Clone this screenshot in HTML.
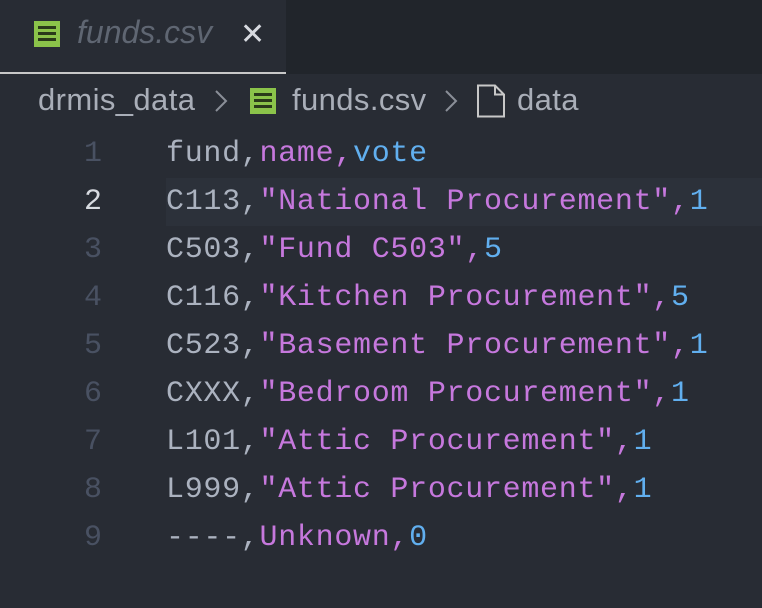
<!DOCTYPE html>
<html><head><meta charset="utf-8"><style>
*{margin:0;padding:0;box-sizing:border-box}
body{width:762px;height:608px;background:#282c34;overflow:hidden;position:relative;font-family:"Liberation Sans",sans-serif}
.tabbar{position:absolute;left:0;top:0;width:762px;height:74px;background:#21252b}
.tab{position:absolute;left:0;top:0;width:286px;height:74px;background:#282c34;border-bottom:2px solid #c8c8c8}
.tab .name{position:absolute;left:77px;top:14px;font-size:32px;font-style:italic;color:#5f6672}
.tab .x{position:absolute;left:240px;top:17px;font-size:30px;color:#d7dae0}
.ico{position:absolute;width:26px;height:26px;background:#8bc34a}
.ico i{position:absolute;left:4px;width:18px;height:3px;background:#2a3a1a}
.bc{position:absolute;top:82px;font-size:31px;color:#a9aeb8;letter-spacing:0.4px}
.code{position:absolute;top:130px;left:0;width:762px;font-family:"Liberation Mono",monospace;font-size:30px}
.ln{height:48px;line-height:48px;position:relative}
.ln .n{position:absolute;right:660px;color:#495162;width:60px;text-align:right}
.ln .t{position:absolute;left:166px;color:#abb2bf;white-space:pre;letter-spacing:0.7px}
.hl{position:absolute;left:166px;right:0;top:0;bottom:0;background:#2c313a}
.s{color:#c678dd}.b{color:#61afef}
</style></head><body>
<div class="tabbar"></div>
<div class="tab">
 <div class="ico" style="left:34px;top:21px"><i style="top:5px"></i><i style="top:11px"></i><i style="top:17px"></i></div>
 <div class="name">funds.csv</div>
 <div class="x">✕</div>
</div>
<div class="bc" style="left:38px">drmis_data</div>
<svg style="position:absolute;left:212px;top:88px" width="18" height="26" viewBox="0 0 18 26"><path d="M4 3L14 13L4 23" fill="none" stroke="#8a8f98" stroke-width="2"/></svg>
<div class="ico" style="left:250px;top:88px"><i style="top:5px"></i><i style="top:11px"></i><i style="top:17px"></i></div>
<div class="bc" style="left:292px">funds.csv</div>
<svg style="position:absolute;left:442px;top:88px" width="18" height="26" viewBox="0 0 18 26"><path d="M4 3L14 13L4 23" fill="none" stroke="#8a8f98" stroke-width="2"/></svg>
<svg style="position:absolute;left:476px;top:84px" width="30" height="34" viewBox="0 0 30 34"><path d="M2 1.5H19L28 10.5V32.5H2Z M19 1.5V10.5H28" fill="none" stroke="#c8c8c8" stroke-width="2"/></svg>
<div class="bc" style="left:517px">data</div>
<div class="code">
<div class="ln"><span class="n">1</span><span class="t">fund,<span class="s">name,</span><span class="b">vote</span></span></div>
<div class="ln"><div class="hl"></div><span class="n" style="color:#d7dae0">2</span><span class="t">C113,<span class="s">"National Procurement",</span><span class="b">1</span></span></div>
<div class="ln"><span class="n">3</span><span class="t">C503,<span class="s">"Fund C503",</span><span class="b">5</span></span></div>
<div class="ln"><span class="n">4</span><span class="t">C116,<span class="s">"Kitchen Procurement",</span><span class="b">5</span></span></div>
<div class="ln"><span class="n">5</span><span class="t">C523,<span class="s">"Basement Procurement",</span><span class="b">1</span></span></div>
<div class="ln"><span class="n">6</span><span class="t">CXXX,<span class="s">"Bedroom Procurement",</span><span class="b">1</span></span></div>
<div class="ln"><span class="n">7</span><span class="t">L101,<span class="s">"Attic Procurement",</span><span class="b">1</span></span></div>
<div class="ln"><span class="n">8</span><span class="t">L999,<span class="s">"Attic Procurement",</span><span class="b">1</span></span></div>
<div class="ln"><span class="n">9</span><span class="t">----,<span class="s">Unknown,</span><span class="b">0</span></span></div>
</div>
</body></html>
